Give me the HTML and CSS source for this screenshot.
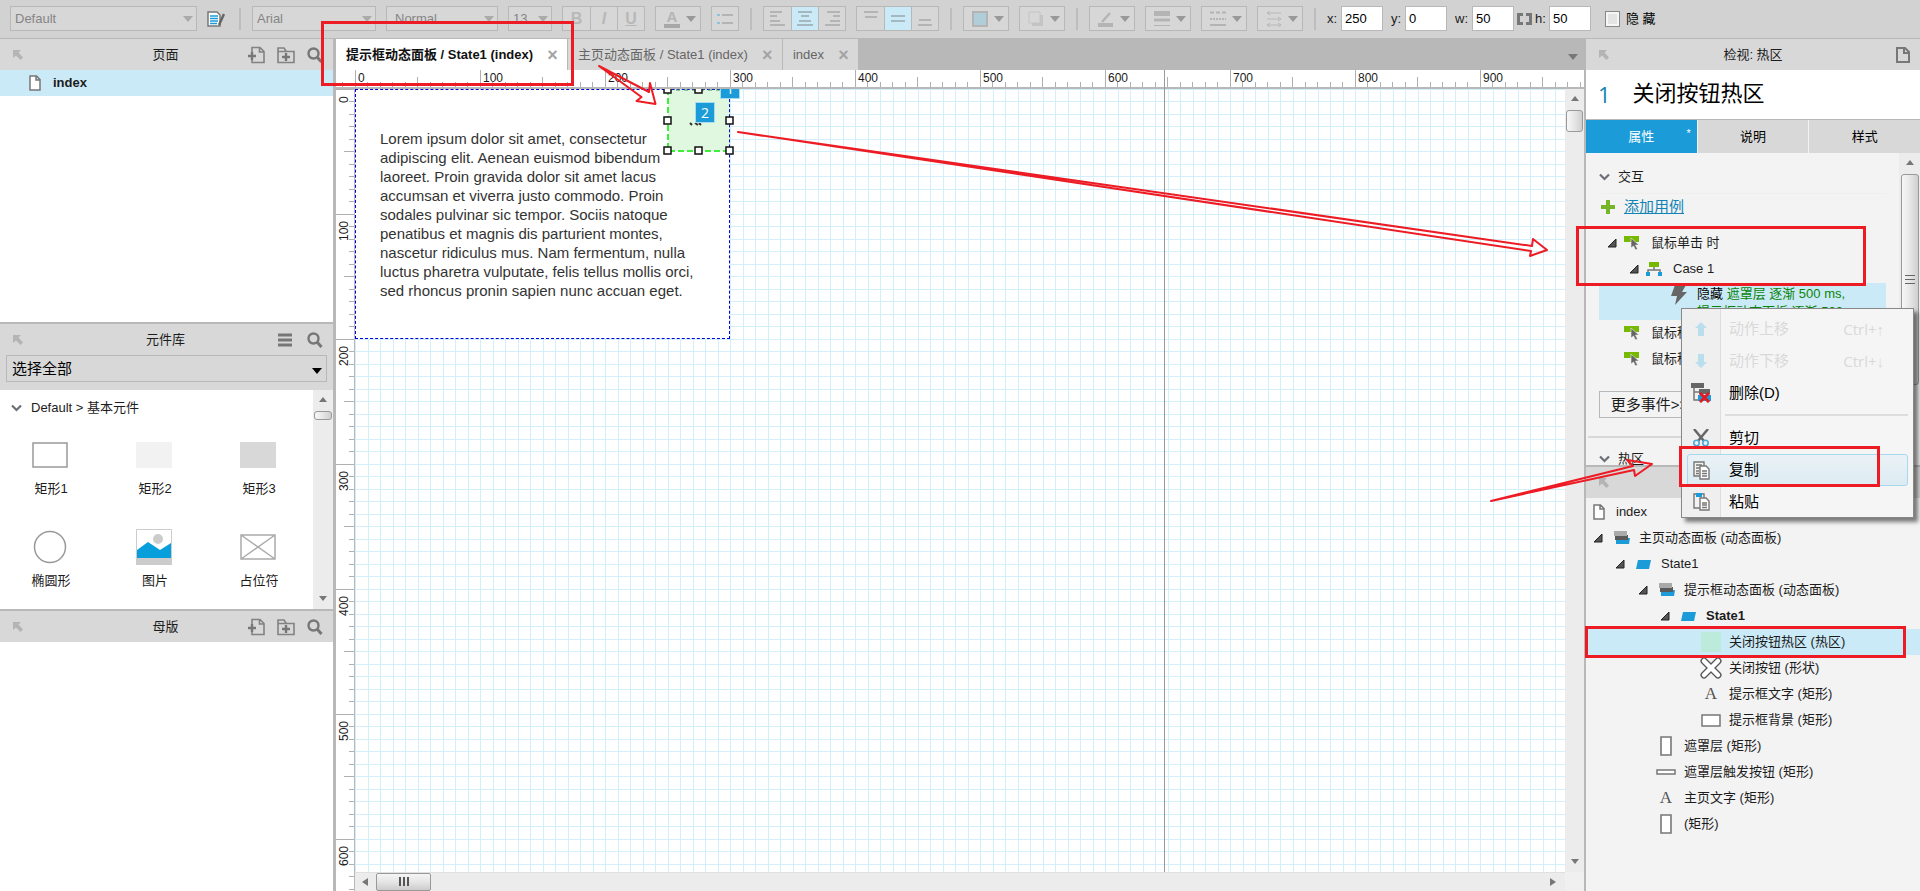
FILE: index.html
```html
<!DOCTYPE html>
<html lang="zh-CN">
<head>
<meta charset="utf-8">
<title>提示框动态面板 / State1 (index)</title>
<link rel="stylesheet" href="styles.css">
</head>
<body>
<svg class="defs" aria-hidden="true">
  <symbol id="pin" viewBox="0 0 12 12"><path d="M1 1h8L6.500 3.500 11 8.500 8.500 11 4 6.500 1 9z" fill="#b4b4b4"/></symbol>
  <symbol id="search" viewBox="0 0 16 16"><circle cx="6.500" cy="6.500" r="5" fill="none" stroke="#777" stroke-width="2.400"/><path d="M10 10l4.500 5" stroke="#777" stroke-width="3"/></symbol>
  <symbol id="addpage" viewBox="0 0 17 18"><path d="M4 6V1.500h8l4 4v11H4V14M11.500 2v4h4" fill="none" stroke="#828282" stroke-width="1.600"/><path d="M0 10h8M4 6v8" stroke="#777" stroke-width="2.400"/></symbol>
  <symbol id="addfolder" viewBox="0 0 18 18"><path d="M1 5.500h16v11H1zM1 5V2h6l2 3" fill="none" stroke="#828282" stroke-width="1.600"/><path d="M5 11h8M9 7v8" stroke="#777" stroke-width="2.400"/></symbol>
  <symbol id="page" viewBox="0 0 12 16"><path d="M1 1h6.500L11 4.500V15H1zM7 1v4h4" fill="#fff" stroke="#777" stroke-width="1.500"/></symbol>
  <symbol id="chev" viewBox="0 0 11 8"><path d="M1 1.500l4.500 4.500L10 1.500" fill="none" stroke="#6b6e76" stroke-width="2.200"/></symbol>
  <symbol id="tri" viewBox="0 0 10 10"><path d="M9 1v8H1z" fill="#555" stroke="#222"/></symbol>
  <symbol id="event" viewBox="0 0 16 16"><path d="M0 1h15v6H0z" fill="#76b900"/><path d="M7 3v10l2.500-2 2 4 2-1-2-4H15z" fill="#666" stroke="#f3f3f3" stroke-width=".6"/></symbol>
  <symbol id="panel" viewBox="0 0 17 14"><path d="M3 7h14l-1 6H3z" fill="#1b9cd8"/><path d="M2 4h13v5H2z" fill="#5a5a5a"/><path d="M1 0h13v5H1z" fill="#aaa"/></symbol>
  <symbol id="state" viewBox="0 0 15 9"><path d="M2 0h13l-2 9H0z" fill="#1b9cd8"/></symbol>
  <symbol id="down" viewBox="0 0 10 6"><path d="M0 0h10L5 6z"/></symbol>
  <symbol id="tall" viewBox="0 0 12 20"><path d="M1 1h10v18H1z" fill="#fff" stroke="#777" stroke-width="1.600"/></symbol>
</svg>
<div class="app">
  <header class="toolbar">
    <div class="pick pick-style"><select aria-label="样式"><option>Default</option></select><svg><use href="#down"/></svg></div>
    <button class="plain" aria-label="编辑样式"><svg width="18" height="16" viewBox="0 0 18 16"><path d="M1 1h9l3 3v11H1z" fill="#fff" stroke="#777" stroke-width="1.500"/><path d="M3 5h8M3 7.500h8M3 10h8M3 12.500h7" stroke="#1b9cd8" stroke-width="1.500"/><path d="M17 3l-5 11" stroke="#666" stroke-width="2.500"/></svg></button>
    <i class="sep"></i>
    <div class="pick pick-font"><select aria-label="字体"><option>Arial</option></select><svg><use href="#down"/></svg></div>
    <div class="pick pick-weight"><select aria-label="字型"><option>Normal</option></select><svg><use href="#down"/></svg></div>
    <div class="pick pick-size"><select aria-label="字号"><option>13</option></select><svg><use href="#down"/></svg></div>
    <div class="group"><button class="b">B</button><button class="it">I</button><button class="u">U</button></div>
    <button class="drop"><span class="acolor">A</span><svg class="dn"><use href="#down"/></svg></button>
    <button class="tool" aria-label="列表"><svg width="16" height="12" viewBox="0 0 16 12"><path d="M5 2h11M5 10h11" stroke="#b4b4b4" stroke-width="2"/><path d="M0 2h3M0 10h3" stroke="#8fc3d8" stroke-width="2"/></svg></button>
    <i class="sep"></i>
    <div class="group">
      <button aria-label="左对齐"><svg width="16" height="16" viewBox="0 0 16 16"><path d="M0 1h12M0 5h7M0 10h10M0 14h15" stroke="#b4b4b4" stroke-width="2"/></svg></button>
      <button class="on" aria-label="居中"><svg width="16" height="16" viewBox="0 0 16 16"><path d="M1 1h14M4 5h8M2 10h12M0 14h16" stroke="#a5b7bf" stroke-width="2"/></svg></button>
      <button aria-label="右对齐"><svg width="16" height="16" viewBox="0 0 16 16"><path d="M3 1h13M9 5h7M6 10h10M1 14h15" stroke="#b4b4b4" stroke-width="2"/></svg></button>
    </div>
    <div class="group">
      <button aria-label="顶端"><svg width="14" height="16" viewBox="0 0 14 16"><path d="M0 1h14M1 6h12" stroke="#b4b4b4" stroke-width="2"/></svg></button>
      <button class="on" aria-label="中部"><svg width="14" height="16" viewBox="0 0 14 16"><path d="M0 5h14M0 10h14" stroke="#a5b7bf" stroke-width="2"/></svg></button>
      <button aria-label="底部"><svg width="14" height="16" viewBox="0 0 14 16"><path d="M1 9h12M0 14h14" stroke="#b4b4b4" stroke-width="2"/></svg></button>
    </div>
    <i class="sep"></i>
    <button class="drop" aria-label="填充"><svg width="16" height="16"><path d="M1 1h14v14H1z" fill="#b0ced9" stroke="#b4b4b4" stroke-width="2"/></svg><svg class="dn"><use href="#down"/></svg></button>
    <button class="drop" aria-label="阴影"><svg width="16" height="16"><path d="M4 4h11v11H4z" fill="#c4c4c4"/><path d="M1 1h11v11H1z" fill="#d7d7d7" stroke="#c4c4c4"/></svg><svg class="dn"><use href="#down"/></svg></button>
    <i class="sep"></i>
    <button class="drop" aria-label="线条颜色"><svg width="16" height="16"><path d="M0 14h15" stroke="#b4b4b4" stroke-width="4"/><path d="M4 11l8-9" stroke="#b4b4b4" stroke-width="2.500"/></svg><svg class="dn"><use href="#down"/></svg></button>
    <button class="drop" aria-label="线宽"><svg width="16" height="16"><path d="M0 2.500h16" stroke="#b4b4b4" stroke-width="5"/><path d="M0 9h16" stroke="#b4b4b4" stroke-width="3"/><path d="M0 14.500h16" stroke="#b4b4b4"/></svg><svg class="dn"><use href="#down"/></svg></button>
    <button class="drop" aria-label="线型"><svg width="16" height="16"><path d="M0 1.500h16" stroke="#b4b4b4" stroke-width="2" stroke-dasharray="4 2"/><path d="M0 8h16" stroke="#b4b4b4" stroke-width="2" stroke-dasharray="2 1"/><path d="M0 14h16" stroke="#b4b4b4" stroke-width="2"/></svg><svg class="dn"><use href="#down"/></svg></button>
    <button class="drop" aria-label="箭头"><svg width="16" height="16"><path d="M1 2h14M1 8h14M1 14h14M4 0L1 2l3 2M12 6l3 2-3 2M4 12l-3 2 3 2M12 12l3 2-3 2" stroke="#b8b8b8" fill="none"/></svg><svg class="dn"><use href="#down"/></svg></button>
    <i class="sep"></i>
    <div class="pos">
      <label>x: <input type="text" value="250"></label>
      <label>y: <input type="text" value="0"></label>
      <div class="size"><label class="w">w: <input type="text" value="50"></label>
      <svg width="15" height="12" viewBox="0 0 15 12"><path d="M6 1.500H1.500v9H6M9 1.500h4.500v9H9" fill="none" stroke="#777" stroke-width="3"/></svg>
      <label>h: <input type="text" value="50"></label></div>
    </div>
    <label class="hide"><input type="checkbox">隐 藏</label>
  </header>

  <aside class="left">
    <section class="pages">
      <div class="head"><svg class="pin"><use href="#pin"/></svg><h2>页面</h2><div class="acts"><button><svg width="17" height="18"><use href="#addpage"/></svg></button><button><svg width="18" height="18"><use href="#addfolder"/></svg></button><button><svg width="16" height="16"><use href="#search"/></svg></button></div></div>
      <div class="pagerow"><svg width="12" height="16"><use href="#page"/></svg><b>index</b></div>
    </section>
    <section class="library">
      <div class="head"><svg class="pin"><use href="#pin"/></svg><h2>元件库</h2><div class="acts wide"><button><svg width="14" height="14"><path d="M0 2h14M0 7h14M0 12h14" stroke="#777" stroke-width="3"/></svg></button><button><svg width="16" height="16"><use href="#search"/></svg></button></div></div>
      <div class="libpick"><select aria-label="元件库"><option>选择全部</option></select><svg><use href="#down"/></svg></div>
      <div class="libbody">
        <div class="libmain">
          <h3><svg width="11" height="8"><use href="#chev"/></svg>Default &gt; 基本元件</h3>
          <div class="widgets">
            <figure><svg width="36" height="36"><path d="M1 6h34v24H1z" fill="#fff" stroke="#999" stroke-width="1.500"/></svg><figcaption>矩形1</figcaption></figure>
            <figure><svg width="36" height="36"><path d="M0 5h36v26H0z" fill="#f2f2f2"/></svg><figcaption>矩形2</figcaption></figure>
            <figure><svg width="36" height="36"><path d="M0 5h36v26H0z" fill="#d8d8d8"/></svg><figcaption>矩形3</figcaption></figure>
            <figure><svg width="36" height="36"><circle cx="18" cy="18" r="15.500" fill="#fff" stroke="#999" stroke-width="1.500"/></svg><figcaption>椭圆形</figcaption></figure>
            <figure><svg width="36" height="36"><path d="M.5.5h35v35H.5z" fill="#fff" stroke="#ccc"/><path d="M0 29h36v7H0z" fill="#ccc"/><circle cx="22" cy="10" r="5" fill="#ccc"/><path d="M1 21l11-8 12 8 11-7v15H1z" fill="#069fdc"/></svg><figcaption>图片</figcaption></figure>
            <figure><svg width="36" height="36"><path d="M1 6h34v24H1zM1 6l34 24M35 6L1 30" fill="none" stroke="#aaa" stroke-width="1.500"/></svg><figcaption>占位符</figcaption></figure>
          </div>
        </div>
        <div class="vbar"><svg class="up"><use href="#down"/></svg><i class="thumb short"></i><svg class="dn end"><use href="#down"/></svg></div>
      </div>
    </section>
    <section class="masters">
      <div class="head"><svg class="pin"><use href="#pin"/></svg><h2>母版</h2><div class="acts"><button><svg width="17" height="18"><use href="#addpage"/></svg></button><button><svg width="18" height="18"><use href="#addfolder"/></svg></button><button><svg width="16" height="16"><use href="#search"/></svg></button></div></div>
    </section>
  </aside>

  <main class="work">
    <nav class="tabs">
      <div class="tab current"><span>提示框动态面板 / State1 (index)</span><button>×</button></div>
      <div class="tab"><span>主页动态面板 / State1 (index)</span><button>×</button></div>
      <div class="tab"><span>index</span><button>×</button></div>
      <button class="more" aria-label="更多"><svg class="dn"><use href="#down"/></svg></button>
    </nav>
    <div class="hruler"><span>0</span><span>100</span><span>200</span><span>300</span><span>400</span><span>500</span><span>600</span><span>700</span><span>800</span><span>900</span></div>
    <div class="stage">
      <div class="vruler"><span>0</span><span>100</span><span>200</span><span>300</span><span>400</span><span>500</span><span>600</span></div>
      <div class="view">
        <div class="canvas">
          <div class="dialog"><p>Lorem ipsum dolor sit amet, consectetur<br>adipiscing elit. Aenean euismod bibendum<br>laoreet. Proin gravida dolor sit amet lacus<br>accumsan et viverra justo commodo. Proin<br>sodales pulvinar sic tempor. Sociis natoque<br>penatibus et magnis dis parturient montes,<br>nascetur ridiculus mus. Nam fermentum, nulla<br>luctus pharetra vulputate, felis tellus mollis orci,<br>sed rhoncus pronin sapien nunc accuan eget.</p></div>
          <svg class="hotspot" width="71" height="70"><path d="M5 0h62v62H5z" fill="rgba(0,200,0,.12)"/><path d="M5 0v62h61" fill="none" stroke="#3cf03c" stroke-width="2" stroke-dasharray="6 3"/><path d="M5 1h61" stroke="#3c8c6c" stroke-width="1" stroke-dasharray="4 4"/><path d="M27 34l2 2M32 34l3 2M36 34l2 2" stroke="#333" stroke-width="2"/><g fill="#fff" stroke="#111" stroke-width="1.500"><path d="M1-4h7v8H1zM32-4h7v8h-7zM1 28h7v7H1zM63 28h7v7h-7zM1 58h7v7H1zM32 58h7v7h-7zM63 58h7v7h-7z"/></g></svg>
          <span class="badge one">1</span><span class="badge two">2</span>
        </div>
        <div class="vbar"><svg class="up"><use href="#down"/></svg><i class="thumb mid"></i><svg class="dn end"><use href="#down"/></svg></div>
        <div class="hbar"><svg width="6" height="8"><path d="M6 0v8L0 4z" fill="#777"/></svg><i class="hthumb"><svg width="12" height="10"><path d="M2 0v9M6 0v9M10 0v9" stroke="#555" stroke-width="2"/></svg></i><svg class="end" width="6" height="8"><path d="M0 0v8l6-4z" fill="#777"/></svg></div>
        <div class="corner"></div>
      </div>
    </div>
    <i class="guide"></i>
  </main>

  <aside class="right">
    <div class="head"><svg class="pin"><use href="#pin"/></svg><h2>检视: 热区</h2><div class="acts"><svg width="14" height="16" viewBox="0 0 14 16"><path d="M1 1h8l4 4v10H1zM8 1v5h5" fill="none" stroke="#777" stroke-width="2"/></svg></div></div>
    <div class="name"><em>1</em><span>关闭按钮热区</span></div>
    <div class="modes"><button class="active">属性<sup>*</sup></button><button>说明</button><button>样式</button></div>
    <div class="props">
      <div class="propmain">
        <h3><svg width="11" height="8"><use href="#chev"/></svg>交互</h3>
        <div class="add"><svg width="14" height="14"><path d="M0 7h14M7 0v14" stroke="#76b52a" stroke-width="4"/></svg><a href="#">添加用例</a></div>
        <div class="ev"><svg class="tri"><use href="#tri"/></svg><svg class="evi"><use href="#event"/></svg>鼠标单击 时</div>
        <div class="ev case"><svg class="tri"><use href="#tri"/></svg><svg class="evi" viewBox="0 0 16 16"><path d="M3 1h10v5H3z" fill="#76b900"/><path d="M8 6v3M2 12V9h12v3" fill="none" stroke="#777" stroke-width="1.500"/><path d="M0 11h4v4H0zM12 11h4v4h-4z" fill="#1b9cd8"/></svg>Case 1</div>
        <div class="action"><svg width="16" height="21" viewBox="0 0 16 21"><path d="M4 0h11l-4 7h5L4 20l2-9H0z" fill="#666"/></svg><div><span>隐藏</span> 遮罩层 逐渐 500 ms,<br>提示框动态面板 逐渐 500 ms</div></div>
        <div class="ev leaf"><svg class="evi"><use href="#event"/></svg>鼠标移入 时</div>
        <div class="ev leaf"><svg class="evi"><use href="#event"/></svg>鼠标移出 时</div>
        <button class="moreev">更多事件&gt;&gt;&gt;</button>
        <hr>
        <h3 class="hot"><svg width="11" height="8"><use href="#chev"/></svg>热区</h3>
      </div>
      <div class="vbar"><svg class="up"><use href="#down"/></svg><i class="thumb long"><svg width="10" height="12"><path d="M0 1.500h10M0 5.500h10M0 9.500h10" stroke="#666"/></svg></i></div>
    </div>
    <div class="outline">
      <div class="head"><svg class="pin"><use href="#pin"/></svg></div>
      <ul>
        <li class="d0 root"><svg width="12" height="16"><use href="#page"/></svg>index</li>
        <li class="d0"><svg class="tri"><use href="#tri"/></svg><i class="ic"><svg width="17" height="14"><use href="#panel"/></svg></i>主页动态面板 (动态面板)</li>
        <li class="d1"><svg class="tri"><use href="#tri"/></svg><i class="ic"><svg width="15" height="9"><use href="#state"/></svg></i>State1</li>
        <li class="d2"><svg class="tri"><use href="#tri"/></svg><i class="ic"><svg width="17" height="14"><use href="#panel"/></svg></i>提示框动态面板 (动态面板)</li>
        <li class="d3"><svg class="tri"><use href="#tri"/></svg><i class="ic"><svg width="15" height="9"><use href="#state"/></svg></i><b>State1</b></li>
        <li class="d4 sel"><i class="ic"><svg width="20" height="20"><path d="M0 0h20v20H0z" fill="#bdebdb"/></svg></i>关闭按钮热区 (热区)</li>
        <li class="d4"><i class="ic"><svg width="22" height="22" viewBox="0 0 22 22"><path d="M4 4l14 14M18 4L4 18" stroke="#555" stroke-width="7" stroke-linecap="round"/><path d="M4 4l14 14M18 4L4 18" stroke="#fff" stroke-width="4.500" stroke-linecap="round"/></svg></i>关闭按钮 (形状)</li>
        <li class="d4"><i class="ic let">A</i>提示框文字 (矩形)</li>
        <li class="d4"><i class="ic"><svg width="20" height="13"><path d="M1 1h18v11H1z" fill="#fff" stroke="#777" stroke-width="1.500"/></svg></i>提示框背景 (矩形)</li>
        <li class="d2 noarrow"><i class="ic"><svg width="12" height="20"><use href="#tall"/></svg></i>遮罩层 (矩形)</li>
        <li class="d2 noarrow"><i class="ic"><svg width="20" height="6"><path d="M1 1h18v4H1z" fill="#fff" stroke="#777" stroke-width="1.500"/></svg></i>遮罩层触发按钮 (矩形)</li>
        <li class="d2 noarrow"><i class="ic let">A</i>主页文字 (矩形)</li>
        <li class="d2 noarrow"><i class="ic"><svg width="12" height="20"><use href="#tall"/></svg></i>(矩形)</li>
      </ul>
    </div>
  </aside>

  <div class="menu" role="menu">
    <button disabled><i><svg width="12" height="15"><path d="M6 0l6 6H9v8H3V6H0z" fill="#b9dfee"/></svg></i>动作上移<kbd>Ctrl+↑</kbd></button>
    <button disabled><i><svg width="12" height="15"><path d="M6 14l6-6H9V0H3v8H0z" fill="#b9dfee"/></svg></i>动作下移<kbd>Ctrl+↓</kbd></button>
    <button><i><svg width="20" height="20"><path d="M0 0h13v5H0zM8 6h11v5H8z" fill="#666"/><path d="M3 5v12h5M3 9h5" stroke="#777" fill="none" stroke-width="1.500"/><path d="M7 12h13v6H7z" fill="#1b9cd8"/><path d="M9 10l9 9M18 10l-9 9" stroke="#e01b24" stroke-width="3"/></svg></i>删除(D)</button>
    <hr>
    <button><i><svg width="16" height="18"><path d="M1 0l10 12M15 0L5 12" stroke="#666" stroke-width="2.500"/><circle cx="3.500" cy="14" r="2.700" fill="none" stroke="#4aa9dc" stroke-width="1.600"/><circle cx="12.500" cy="14" r="2.700" fill="none" stroke="#4aa9dc" stroke-width="1.600"/></svg></i>剪切</button>
    <button class="hover"><i><svg width="17" height="19"><path d="M1 1h10v14H1zM3 4h6M3 7h4M3 10h3M3 12.500h3" fill="#f3f3f3" stroke="#777" stroke-width="1.400"/><path d="M7 5h6l3 3v10H7zM9 10h5M9 12.500h5M9 15h5" fill="#fff" stroke="#777" stroke-width="1.400"/></svg></i>复制</button>
    <button><i><svg width="17" height="18"><path d="M1 1h10v14H1z" fill="#f3f3f3" stroke="#777" stroke-width="1.400"/><path d="M3 0h6v4H3z" fill="#1b9cd8"/><path d="M7 5h6l3 3v9H7zM9 10h5M9 12h5M9 14.500h5" fill="#fff" stroke="#777" stroke-width="1.400"/></svg></i>粘贴</button>
  </div>

  <div class="mark m1"></div><div class="mark m2"></div><div class="mark m3"></div><div class="mark m4"></div>
  <svg class="arrow a1" width="60" height="42" viewBox="0 0 60 42"><path d="M1 1l50 26 1-9 5.500 21-19-3 5-4z"/></svg>
  <svg class="arrow a2" width="812" height="128" viewBox="0 0 812 128"><path d="M1 1l794 114 1-7 14 11-17 6 1-5z"/></svg>
  <svg class="arrow a3" width="164" height="44" viewBox="0 0 164 44"><path d="M1 42L143 7l-6-6 25 4-17 12-1-6z"/></svg>
</div>
</body>
</html>
```
FILE: styles.css
```css
* { box-sizing: border-box; }
body { margin: 0; font: 13px/18px "Liberation Sans", "Noto Sans CJK SC", sans-serif; color: #1c1c1c; }
button, input, select { font: inherit; color: inherit; margin: 0; }
button { padding: 0; border: 0; background: none; }
h2, h3, p, ul, figure { margin: 0; padding: 0; font-weight: normal; font-size: inherit; }
svg { flex: none; display: block; }
.defs { position: absolute; width: 0; height: 0; }

.app { position: relative; display: grid; grid-template: 39px minmax(0, 1fr) / 336px minmax(0, 1fr) 334px; height: 100vh; overflow: hidden; }

/* toolbar */
.toolbar { grid-column: 1 / -1; display: flex; align-items: center; gap: 10px; padding: 0 10px 1px; background: #d2d2d2; border-bottom: 1px solid #b8b8b8; white-space: nowrap; }
.toolbar > * { flex: none; }
.toolbar .sep { width: 2px; height: 22px; margin: 0 1px; background: #bdbdbd; }
.pick { position: relative; height: 25px; }
.pick select { appearance: none; width: 100%; height: 100%; padding: 0 4px; border: 1px solid #b8b8b8; background: #d7d7d7; color: #858585; border-radius: 0; }
.pick svg { position: absolute; right: 4px; top: 10px; width: 10px; height: 6px; fill: #aaa; }
.pick-style { width: 187px; }
.pick-font { width: 124px; }
.pick-weight { width: 112px; }
.pick-weight select { padding-left: 8px; }
.pick-size { width: 44px; }
.plain { width: 21px; }
.group, .drop, .tool { display: flex; height: 25px; border: 1px solid #b8b8b8; background: #d7d7d7; }
.group button { display: flex; align-items: center; justify-content: center; width: 27px; color: #b8b8b8; font-size: 16px; font-weight: bold; }
.group button + button { border-left: 1px solid #b8b8b8; }
.group .on { background: #cbeaf7; }
.group .it { font-style: italic; }
.group .u { text-decoration: underline; }
.drop { width: 46px; align-items: center; justify-content: space-between; padding: 0 4px 0 8px; }
.tool { width: 28px; align-items: center; justify-content: center; }
.acolor { width: 16px; border-bottom: 4px solid #a8a8a8; color: #b4b4b4; font-size: 15px; line-height: 14px; font-weight: bold; }
.dn, .up { width: 10px; height: 6px; fill: #999; }
.up { transform: rotate(180deg); }
.pos { display: flex; gap: 8px; }
.pos label { display: flex; align-items: center; justify-content: space-between; width: 56px; }
.pos .w { width: 59px; }
.pos input { width: 42px; height: 25px; padding: 0 3px; border: 1px solid #b8b8b8; background: #fff; color: #000; }
.size { display: flex; align-items: center; gap: 3px; }
.hide { display: flex; align-items: center; gap: 6px; padding-left: 4px; color: #000; }
.hide input { appearance: none; width: 15px; height: 16px; border: 1px solid #888; background: #e4e4e4; box-shadow: inset 0 0 0 2px #f6f6f6; }

/* shared panels */
.head { position: relative; display: flex; align-items: center; justify-content: center; height: 31px; background: #d8d8d8; }
.pin { position: absolute; left: 12px; width: 12px; height: 12px; }
.acts { position: absolute; right: 10px; display: flex; align-items: center; gap: 12px; }
.acts.wide { gap: 15px; }
.left { display: grid; grid-template-rows: 283px 287px minmax(0, 1fr); border-right: 3px solid #b8b8b8; background: #fff; }
.left .head h2 { padding-right: 2px; }
.pagerow { display: flex; align-items: center; gap: 12px; height: 26px; padding-left: 29px; background: #cbeaf7; }
.library, .masters { border-top: 2px solid #b8b8b8; }
.library { display: flex; flex-direction: column; background: #d8d8d8; }
.libpick { position: relative; margin: 0 6px 8px; }
.libpick select { appearance: none; display: block; width: 100%; height: 27px; padding: 0 5px; border: 1px solid #b8b8b8; border-radius: 0; background: #d8d8d8; font-size: 15px; color: #000; }
.libpick svg { position: absolute; right: 5px; top: 13px; width: 10px; height: 6px; }
.libbody { display: flex; flex: 1; min-height: 0; background: #fff; }
.libmain { flex: 1; }
.libmain h3 { display: flex; align-items: center; gap: 9px; padding: 9px 0 0 11px; }
.widgets { display: grid; grid-template-columns: repeat(3, 104px); row-gap: 28px; padding-top: 20px; }
.widgets figure { display: flex; flex-direction: column; align-items: center; gap: 7px; height: 64px; padding-right: 4px; }
.widgets figcaption { padding-left: 2px; }
.vbar { display: flex; flex-direction: column; align-items: center; width: 20px; padding: 7px 0 8px; background: #ececec; }
.vbar .up, .vbar .dn { width: 8px; height: 5px; fill: #777; }
.vbar .end { margin-top: auto; }
.thumb { display: flex; align-items: center; justify-content: center; width: 18px; margin-top: 9px; border: 1px solid #999; border-radius: 3px; background: linear-gradient(90deg, #f7f7f7, #e6e6e6 50%, #cfcfcf); }
.short { height: 9px; }
.mid { height: 22px; }
.long { height: 211px; }

/* workspace */
.work { position: relative; display: flex; flex-direction: column; min-width: 0; border-right: 2px solid #b8b8b8; background: #fff; }
.tabs { display: flex; height: 31px; background: #b8b8b8; white-space: nowrap; }
.tab { display: flex; align-items: center; gap: 14px; padding: 0 9px 0 10px; border-right: 1px solid #b8b8b8; background: #d8d8d8; color: #666; }
.tab button { width: 11px; color: #a4a4a4; font-size: 18px; font-weight: bold; }
.tab.current { background: #fff; color: #111; font-weight: bold; }
.more { margin: 4px 6px 0 auto; }
.more .dn { fill: #777; }
.hruler, .vruler { display: flex; flex: none; overflow: hidden; font-size: 12px; }
.hruler { height: 19px; padding-left: 19px; border-bottom: 2px solid #b8b8b8; background:
  linear-gradient(90deg, #b0b0b0 1px, transparent 1px) 19px 0 / 125px 17px repeat-x,
  linear-gradient(90deg, #b0b0b0 1px, transparent 1px) 81px 7px / 125px 10px repeat-x,
  linear-gradient(90deg, #b0b0b0 1px, transparent 1px) 19px 12px / 25px 5px repeat-x,
  linear-gradient(90deg, #b0b0b0 1px, transparent 1px) 31px 12px / 25px 5px repeat-x; }
.hruler span { flex: none; width: 125px; padding-left: 3px; line-height: 17px; }
.stage { display: flex; flex: 1; min-height: 0; }
.vruler { flex-direction: column; width: 19px; border-right: 1px solid #b8b8b8; background:
  linear-gradient(#b0b0b0 1px, transparent 1px) 0 0 / 18px 125px repeat-y,
  linear-gradient(#b0b0b0 1px, transparent 1px) 8px 62px / 10px 125px repeat-y,
  linear-gradient(#b0b0b0 1px, transparent 1px) 13px 0 / 5px 25px repeat-y,
  linear-gradient(#b0b0b0 1px, transparent 1px) 13px 12px / 5px 25px repeat-y; }
.vruler span { flex: none; height: 125px; padding-bottom: 7px; writing-mode: vertical-rl; transform: rotate(180deg); text-align: right; line-height: 16px; align-self: flex-start; }
.vruler span { padding-top: 8px; }
.view { flex: 1; display: grid; grid-template: minmax(0, 1fr) 19px / minmax(0, 1fr) 19px; min-width: 0; }
.canvas { position: relative; overflow: hidden; background:
  linear-gradient(90deg, #d3effb 1px, transparent 1px) 0 0 / 25px 25px,
  linear-gradient(90deg, #d3effb 1px, transparent 1px) 13px 0 / 25px 25px,
  linear-gradient(#d3effb 1px, transparent 1px) 0 0 / 25px 25px,
  linear-gradient(#d3effb 1px, transparent 1px) 0 12px / 25px 25px; }
.dialog { position: absolute; left: 0; top: 0; width: 375px; height: 250px; padding: 39px 0 0 24px; border: 1px dashed #00d; background: #fff; }
.dialog p { font-size: 15px; line-height: 19px; color: #333; white-space: nowrap; }
.hotspot { position: absolute; left: 308px; top: 0; }
.badge { position: absolute; width: 20px; height: 21px; border: 1px solid #a8dcf2; background: #1b9cd8; color: #fff; font: 14px/19px "Open Sans", sans-serif; text-align: center; }
.one { left: 365px; top: -11px; }
.two { left: 340px; top: 13px; }
.view .vbar { width: 19px; }
.view .thumb { width: 17px; }
.hbar { display: flex; align-items: center; padding: 0 9px 0 7px; background: #ececec; border-top: 1px solid #e0e0e0; }
.hbar .hthumb { display: flex; align-items: center; justify-content: center; width: 55px; height: 18px; margin-left: 8px; border: 1px solid #999; border-radius: 2px; background: linear-gradient(#f5f5f5, #e5e5e5 50%, #ccc); }
.hbar .end { margin-left: auto; }
.corner { background: #f0f0f0; }
.guide { position: absolute; left: 828px; top: 31px; bottom: 19px; width: 1px; background: #999; }

/* inspector */
.right { display: flex; flex-direction: column; min-height: 0; background: #f3f3f3; }
.name { display: flex; align-items: center; gap: 22px; height: 49px; padding: 0 0 2px 12px; background: #fff; font-size: 22px; line-height: 30px; color: #000; }
.name em { font: 22px/30px "Open Sans", sans-serif; color: #1283b5; }
.modes { display: flex; height: 34px; border-top: 1px solid #b8b8b8; }
.modes button { position: relative; flex: 1; background: #d8d8d8; color: #000; border-left: 1px solid #f3f3f3; }
.modes .active { background: #1b9cd8; color: #fff; border: 0; }
.modes sup { position: absolute; right: 6px; top: 6px; line-height: 14px; }
.props { display: flex; height: 312px; overflow: hidden; }
.propmain { flex: 1; padding: 12px 0 0 13px; white-space: nowrap; }
.props h3 { display: flex; align-items: center; gap: 8px; height: 24px; }
.props .hot { height: 18px; }
.props .vbar { width: 21px; }
.add { display: flex; align-items: center; gap: 9px; height: 27px; margin: 4px 13px 10px 2px; border-top: 1px solid #eee; font-size: 15px; }
.add a { color: #1283b5; }
.ev { display: flex; align-items: center; height: 26px; padding-left: 8px; }
.tri { width: 10px; height: 10px; }
.evi { width: 16px; height: 16px; margin: 0 11px 0 7px; }
.case { padding-left: 30px; }
.leaf { padding-left: 18px; }
.action { display: flex; gap: 10px; height: 37px; margin: 1px 13px 0 0; padding: 2px 0 0 72px; overflow: hidden; background: #cbeaf7; color: #0a850a; line-height: 18px; }
.action span { color: #000; }
.moreev { display: block; width: 110px; height: 27px; margin-top: 19px; border: 1px solid #b8b8b8; font-size: 15px; }
.props hr { height: 2px; margin: 18px 0 12px -11px; border: 0; background: #d8d8d8; }
.outline { flex: 1; border-top: 2px solid #b8b8b8; }
.outline ul { list-style: none; padding-top: 1px; }
.outline li { display: flex; align-items: center; height: 26px; white-space: nowrap; }
.outline .root { padding-left: 7px; gap: 11px; }
.ic { display: flex; align-items: center; justify-content: center; width: 22px; margin: 0 7px; font-style: normal; }
.let { font: 17px/20px "Liberation Serif", serif; color: #555; }
.d0 { padding-left: 7px; }
.d1 { padding-left: 29px; }
.d2 { padding-left: 52px; }
.d3 { padding-left: 74px; }
.d4 { padding-left: 107px; }
.noarrow { padding-left: 62px; }
.sel { background: #cbeaf7; }

/* context menu */
.menu { position: absolute; right: 6px; top: 308px; width: 233px; padding: 4px 5px 0; height: 210px; border: 1px solid #888; background: linear-gradient(90deg, #efefef 38px, #ddd 38px 39px, #f5f5f5 39px); box-shadow: 4px 4px 4px rgba(0, 0, 0, .5); font-size: 15px; }
.menu button { display: flex; align-items: center; width: 100%; height: 32px; border: 1px solid transparent; border-radius: 3px; color: #000; }
.menu i { display: flex; justify-content: center; width: 26px; margin-right: 15px; }
.menu button:disabled { color: #d9d9d9; }
.menu kbd { margin-left: auto; padding-right: 23px; font: 15px/20px "Open Sans", sans-serif; }
.menu hr { height: 2px; margin: 5px 0 6px 38px; border: 0; background: #ddd; }
.menu .hover { background: linear-gradient(#eaf2f6, #dcebf2); border-color: #a8d8ee; }

/* callouts */
.mark { position: absolute; border: 3px solid #ed1c24; }
.m1 { left: 321px; top: 21px; width: 253px; height: 65px; }
.m2 { right: 54px; top: 226px; width: 290px; height: 60px; }
.m3 { right: 40px; top: 446px; width: 201px; height: 41px; }
.m4 { right: 14px; top: 626px; width: 321px; height: 32px; }
.arrow { position: absolute; fill: none; stroke: #ed1c24; stroke-width: 2; stroke-linejoin: round; }
.a1 { left: 598px; top: 65px; }
.a2 { left: 737px; top: 131px; }
.a3 { right: 266px; top: 459px; }
```
